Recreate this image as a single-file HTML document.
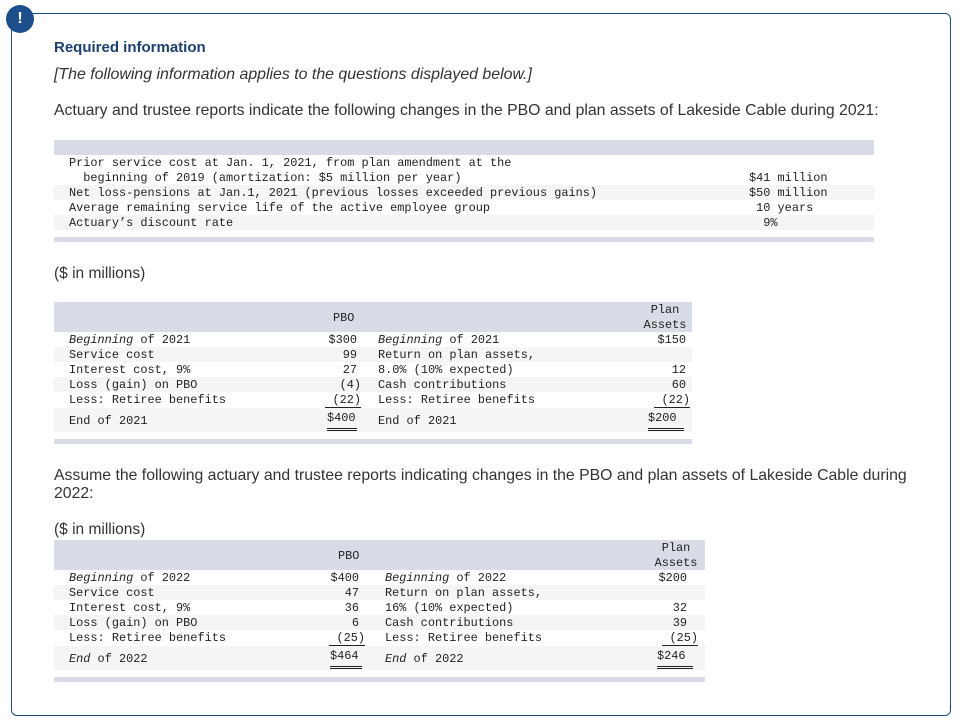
<!DOCTYPE html>
<html><head><meta charset="utf-8"><style>
body{margin:0;width:962px;height:723px;background:#fff;position:relative;overflow:hidden;font-family:"Liberation Sans",sans-serif;color:#333}
.box{position:absolute;left:11px;top:13px;width:938px;height:701px;border:1px solid #1f4e8a;border-radius:6px}
.ic{position:absolute;left:6px;top:5px;width:28px;height:28px;border-radius:50%;background:#1c4f8c;color:#fff;font-weight:bold;font-size:16px;text-align:center;line-height:28px}
.t{position:absolute;white-space:nowrap}
.m{position:absolute;white-space:nowrap;font-family:"Liberation Mono",monospace;font-size:11.9px;color:#222;line-height:15px}
.band{position:absolute;background:#d8dce6}
.sh{position:absolute;background:#f5f5f5}
.r{text-align:right}
.u{border-bottom:1px solid #222}
.dd{border-bottom:3px double #222}
</style></head><body>
<div class="box"></div>
<div class="ic">!</div>
<div class="t" style="left:54px;top:39px;font-size:15px;font-weight:bold;color:#1c4070">Required information</div>
<div class="t" style="left:54px;top:66px;font-size:15.9px;font-style:italic">[The following information applies to the questions displayed below.]</div>
<div class="t" style="left:54px;top:102px;font-size:15.8px">Actuary and trustee reports indicate the following changes in the PBO and plan assets of Lakeside Cable during 2021:</div>

<!-- table 1 -->
<div class="band" style="left:54px;top:140px;width:820px;height:15px"></div>
<div class="sh" style="left:54px;top:185px;width:820px;height:15px"></div>
<div class="sh" style="left:54px;top:215px;width:820px;height:15px"></div>
<div class="band" style="left:54px;top:237px;width:820px;height:5px"></div>
<div class="m" style="left:69px;top:156px">Prior service cost at Jan. 1, 2021, from plan amendment at the<br>&nbsp;&nbsp;beginning of 2019 (amortization: $5 million per year)<br>Net loss-pensions at Jan.1, 2021 (previous losses exceeded previous gains)<br>Average remaining service life of the active employee group<br>Actuary’s discount rate</div>
<div class="m" style="left:749px;top:171px">$41 million<br>$50 million<br>&nbsp;10 years<br>&nbsp;&nbsp;9%</div>

<div class="t" style="left:54px;top:265px;font-size:15.5px">($ in millions)</div>

<!-- table 2 -->
<div class="band" style="left:54px;top:302px;width:638px;height:30px"></div>
<div class="sh" style="left:54px;top:347px;width:638px;height:15px"></div>
<div class="sh" style="left:54px;top:377px;width:638px;height:15px"></div>
<div class="sh" style="left:54px;top:408px;width:638px;height:24px"></div>
<div class="band" style="left:54px;top:439px;width:638px;height:5px"></div>
<div class="m" style="left:333px;top:311px">PBO</div>
<div class="m" style="left:640px;top:303px;width:50px;text-align:center">Plan<br>Assets</div>
<div class="m" style="left:69px;top:333px"><i>Beginning</i> of 2021<br>Service cost<br>Interest cost, 9%<br>Loss (gain) on PBO<br>Less: Retiree benefits</div>
<div class="m" style="left:69px;top:414px">End of 2021</div>
<div class="m r" style="left:300px;top:333px;width:57px">$300</div>
<div class="m r" style="left:300px;top:348px;width:57px">99</div>
<div class="m r" style="left:300px;top:363px;width:57px">27</div>
<div class="m r" style="left:300px;top:378px;width:61px">(4)</div>
<div class="m r" style="left:320px;top:393px;width:41px"><span class="u">&nbsp;(22)</span></div>
<div class="m" style="left:327px;top:411px"><span class="dd" style="display:inline-block;width:30px;padding-bottom:2px">$400</span></div>
<div class="m" style="left:378px;top:333px"><i>Beginning</i> of 2021<br>Return on plan assets,<br>8.0% (10% expected)<br>Cash contributions<br>Less: Retiree benefits</div>
<div class="m" style="left:378px;top:414px">End of 2021</div>
<div class="m r" style="left:630px;top:333px;width:56px">$150<br>&nbsp;<br>12<br>60</div>
<div class="m r" style="left:640px;top:393px;width:50px"><span class="u">&nbsp;(22)</span></div>
<div class="m" style="left:648px;top:411px"><span class="dd" style="display:inline-block;width:36px;padding-bottom:2px">$200</span></div>

<div class="t" style="left:54px;top:467px;font-size:15.8px;line-height:18px;width:870px;white-space:normal">Assume the following actuary and trustee reports indicating changes in the PBO and plan assets of Lakeside Cable during 2022:</div>
<div class="t" style="left:54px;top:521px;font-size:15.5px">($ in millions)</div>

<!-- table 3 -->
<div class="band" style="left:54px;top:540px;width:651px;height:30px"></div>
<div class="sh" style="left:54px;top:585px;width:651px;height:15px"></div>
<div class="sh" style="left:54px;top:615px;width:651px;height:15px"></div>
<div class="sh" style="left:54px;top:646px;width:651px;height:24px"></div>
<div class="band" style="left:54px;top:677px;width:651px;height:5px"></div>
<div class="m" style="left:338px;top:549px">PBO</div>
<div class="m" style="left:651px;top:541px;width:50px;text-align:center">Plan<br>Assets</div>
<div class="m" style="left:69px;top:571px"><i>Beginning</i> of 2022<br>Service cost<br>Interest cost, 9%<br>Loss (gain) on PBO<br>Less: Retiree benefits</div>
<div class="m" style="left:69px;top:652px"><i>End</i> of 2022</div>
<div class="m r" style="left:300px;top:571px;width:59px">$400<br>47<br>36<br>6</div>
<div class="m r" style="left:320px;top:631px;width:45px"><span class="u">&nbsp;(25)</span></div>
<div class="m" style="left:330px;top:649px"><span class="dd" style="display:inline-block;width:32px;padding-bottom:2px">$464</span></div>
<div class="m" style="left:385px;top:571px"><i>Beginning</i> of 2022<br>Return on plan assets,<br>16% (10% expected)<br>Cash contributions<br>Less: Retiree benefits</div>
<div class="m" style="left:385px;top:652px"><i>End</i> of 2022</div>
<div class="m r" style="left:640px;top:571px;width:47px">$200<br>&nbsp;<br>32<br>39</div>
<div class="m r" style="left:650px;top:631px;width:48px"><span class="u">&nbsp;(25)</span></div>
<div class="m" style="left:657px;top:649px"><span class="dd" style="display:inline-block;width:36px;padding-bottom:2px">$246</span></div>
</body></html>
